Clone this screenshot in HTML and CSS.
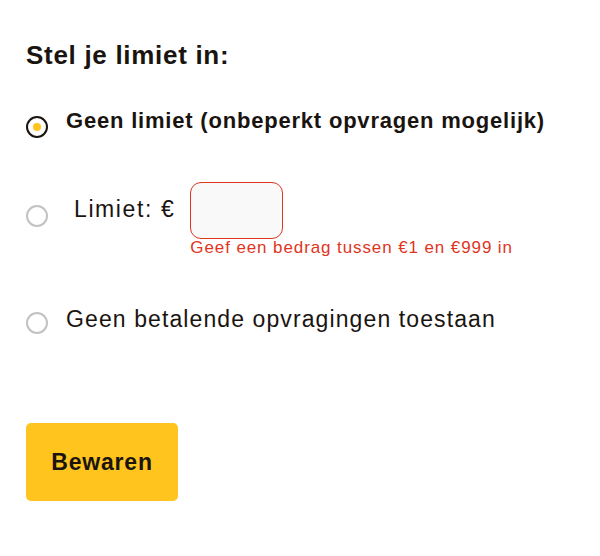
FILE: index.html
```html
<!DOCTYPE html>
<html lang="nl">
<head>
<meta charset="utf-8">
<link rel="stylesheet" href="styles.css">
</head>
<body>
<form class="limit-form">
  <h2 class="title">Stel je limiet in:</h2>
  <div class="options">
    <label class="option option-first">
      <span class="radio radio-on"></span>
      <span class="label bold">Geen limiet (onbeperkt opvragen mogelijk)</span>
    </label>
    <div class="option option-input">
      <span class="radio"></span>
      <span class="label indent">Limiet: €</span>
      <div class="field">
        <span class="input"></span>
        <span class="error">Geef een bedrag tussen €1 en €999 in</span>
      </div>
    </div>
    <label class="option option-last">
      <span class="radio"></span>
      <span class="label">Geen betalende opvragingen toestaan</span>
    </label>
  </div>
  <button type="button" class="btn">Bewaren</button>
</form>
</body>
</html>
```
FILE: styles.css
```css
* { box-sizing: border-box; }
body {
  margin: 0;
  background: #fff;
  font-family: "Liberation Sans", Arial, sans-serif;
  color: #1a1410;
}
.limit-form {
  padding: 40px 26px 0 26px;
}
.title {
  margin: 0;
  font-size: 26px;
  font-weight: 700;
  line-height: 30px;
  letter-spacing: 0.7px;
}
.options {
  margin-top: 37px;
  display: flex;
  flex-direction: column;
}
.option {
  display: flex;
  align-items: flex-start;
  font-size: 23px;
  line-height: 28px;
  letter-spacing: 1.1px;
}
.option-first .radio { margin-top: 9px; }
.option-first .label {
  font-size: 22px;
  letter-spacing: 0.8px;
  font-weight: 700;
}
.option-input { margin-top: 44px; }
.option-input .radio { margin-top: 23px; }
.option-input .label {
  margin-top: 13px;
  letter-spacing: 1.6px;
}
.option-last { margin-top: 48px; }
.option-last .radio { margin-top: 7px; }
.radio {
  width: 22px;
  height: 22px;
  border-radius: 50%;
  border: 2.5px solid #c2c2c2;
  flex: none;
  margin-right: 18px;
  position: relative;
}
.radio-on {
  width: 22px;
  height: 22px;
  border: 2.5px solid #1a1410;
}
.radio-on::after {
  content: "";
  position: absolute;
  left: 50%;
  top: 50%;
  width: 8px;
  height: 8px;
  margin: -4px 0 0 -4px;
  border-radius: 50%;
  background: #ffc41e;
}
.indent { margin-left: 8px; }
.field {
  display: flex;
  flex-direction: column;
  margin-left: 15px;
}
.input {
  width: 93px;
  height: 57px;
  border: 1px solid #e0351e;
  border-radius: 11px;
  background: #f9f9f9;
}
.error {
  color: #e0351e;
  font-size: 17px;
  line-height: 18px;
  letter-spacing: 0.9px;
  white-space: nowrap;
}
.btn {
  display: block;
  margin-top: 89px;
  width: 152px;
  height: 78px;
  border: 0;
  border-radius: 5px;
  background: #ffc41e;
  color: #1a1410;
  font-family: inherit;
  font-size: 23px;
  font-weight: 700;
  letter-spacing: 0.8px;
  padding: 0;
}
```
